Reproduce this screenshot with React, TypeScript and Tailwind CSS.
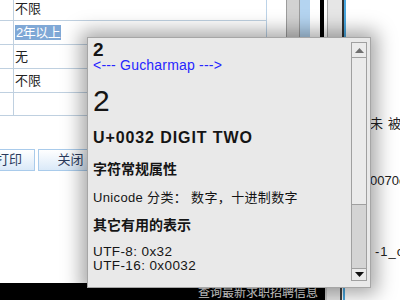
import React from "react";

const rows = [
	{ text: "不限" },
	{ text: "2年以上", selected: true },
	{ text: "无" },
	{ text: "不限" },
	{ text: "" },
];

function TopStrips() {
	return (
		<div className="flex h-[40px] w-[60px] shrink-0">
			<div className="w-[14px] bg-[#d2d2d2] border-x border-[#9c9c9c]" />
			<div className="w-[10px] bg-[#b4d4f0]" />
			<div className="w-[10px] bg-white" />
			<div className="w-[4px] bg-black" />
			<div className="w-[3px] bg-white" />
			<div className="w-[15px] bg-[#e6e6e6] border-l border-[#a8a8a8]" />
			<div className="w-[2px] bg-[#333]" />
			<div className="w-[2px] bg-[#4aa8e0]" />
		</div>
	);
}

function ScrollBar() {
	return (
		<div className="absolute right-[3px] top-[4px] bottom-[6px] w-[16px] border border-[#a0a0a0] bg-[#ebebeb] flex flex-col">
			<div className="h-[15px] border-b border-[#a0a0a0] flex items-center justify-center">
				<svg width="9" height="5" viewBox="0 0 9 5">
					<path d="M0 5 L4.5 0 L9 5 Z" fill="#707070" />
				</svg>
			</div>
			<div className="flex-1" />
			<div className="h-[65px] bg-[#d4d4d4] border-y border-[#a0a0a0]" />
			<div className="h-[11px] flex items-center justify-center">
				<svg width="9" height="5" viewBox="0 0 9 5">
					<path d="M0 0 L9 0 L4.5 5 Z" fill="#111" />
				</svg>
			</div>
		</div>
	);
}

function CharPopup() {
	return (
		<div className="absolute left-[87px] top-[37px] w-[284px] h-[251px] bg-[#e9e9e9] border border-[#a6a6a6] shadow-[0_0_18px_6px_rgba(0,0,0,0.35)] text-[#151515] font-['Liberation_Sans','Noto_Sans_CJK_SC',sans-serif]">
			<div className="pl-[5px] pt-[3px]">
				<div className="h-[18px] text-[19px] leading-[18px] font-bold">2</div>
				<div className="h-[12px] text-[14px] leading-[12px] text-[#2626ff] tracking-[0.2px]">
					&lt;--- Gucharmap ---&gt;
				</div>
				<div className="mt-[13px] h-[34px] text-[30px] leading-[34px]">2</div>
				<div className="mt-[10px] h-[20px] text-[16px] leading-[20px] font-semibold tracking-[0.9px]">
					U+0032 DIGIT TWO
				</div>
				<div className="mt-[11px] h-[20px] text-[14px] leading-[20px] font-bold">
					字符常规属性
				</div>
				<div className="mt-[9px] h-[20px] text-[13px] leading-[20px] tracking-[0.35px]">
					Unicode 分类： 数字，十进制数字
				</div>
				<div className="mt-[7px] h-[20px] text-[14px] leading-[20px] font-bold">
					其它有用的表示
				</div>
				<div className="mt-[10px] text-[13.5px] leading-[14px] tracking-[0.4px]">
					<div>UTF-8: 0x32</div>
					<div>UTF-16: 0x0032</div>
				</div>
			</div>
			<ScrollBar />
		</div>
	);
}

export default function App() {
	return (
		<div className="relative w-[400px] h-[300px] overflow-hidden bg-white font-['Liberation_Sans','Noto_Sans_CJK_SC',sans-serif]">
			<div className="flex h-[283px]">
				<div className="w-[286px] shrink-0 flex flex-col">
					<div className="w-[267px] mt-[-3px] border-r border-[#bcd3e8]">
						{rows.map((r, i) => (
							<div
								key={i}
								className={`flex ${i === rows.length - 1 ? "h-[23px]" : "h-[24px]"} border-b border-[#bfd0e0]`}
							>
								<div className="w-[14px] border-r border-[#bfd0e0]" />
								<div className="flex items-center pl-[1px] text-[13px] text-[#222]">
									{r.selected ? (
										<span className="bg-[#7fa8d6] text-white px-[1px] leading-[15px] tracking-[-0.5px]">{r.text}</span>
									) : (
										<span>{r.text}</span>
									)}
								</div>
							</div>
						))}
					</div>
					<div className="flex gap-[3px] mt-[33px] ml-[-17px]">
						<button className="w-[52px] h-[22px] border border-[#a9cbeb] bg-gradient-to-b from-white to-[#dae9f8] text-[13px] text-[#2b3b5c]">
							打印
						</button>
						<button className="w-[59px] h-[22px] border border-[#a9cbeb] bg-gradient-to-b from-white to-[#dae9f8] text-[13px] text-[#2b3b5c] pl-[6px]">
							关闭
						</button>
					</div>
				</div>
				<TopStrips />
				<div className="flex-1 flex flex-col pl-[24px] text-[13px] text-[#222] whitespace-nowrap">
					<div className="mt-[115px] leading-[18px] tracking-[5px]">未被扩</div>
					<div className="mt-[39px] leading-[18px]">0070c</div>
					<div className="mt-[53px] pl-[5px] leading-[18px] tracking-[1px]">-1_c</div>
				</div>
			</div>
			<div className="flex h-[17px]">
				<div className="w-[325px] bg-black flex justify-end pr-[7px] text-[12px] leading-[20px] text-[#e0e0e0]">
					查询最新求职招聘信息
				</div>
				<div className="w-[2px] bg-[#c8c8c8]" />
				<div className="w-[13px] bg-[#e6e6e6]" />
				<div className="w-[2px] bg-[#444]" />
				<div className="w-[1px] bg-white" />
				<div className="w-[2px] bg-[#4aa8e0]" />
			</div>
			<CharPopup />
		</div>
	);
}
